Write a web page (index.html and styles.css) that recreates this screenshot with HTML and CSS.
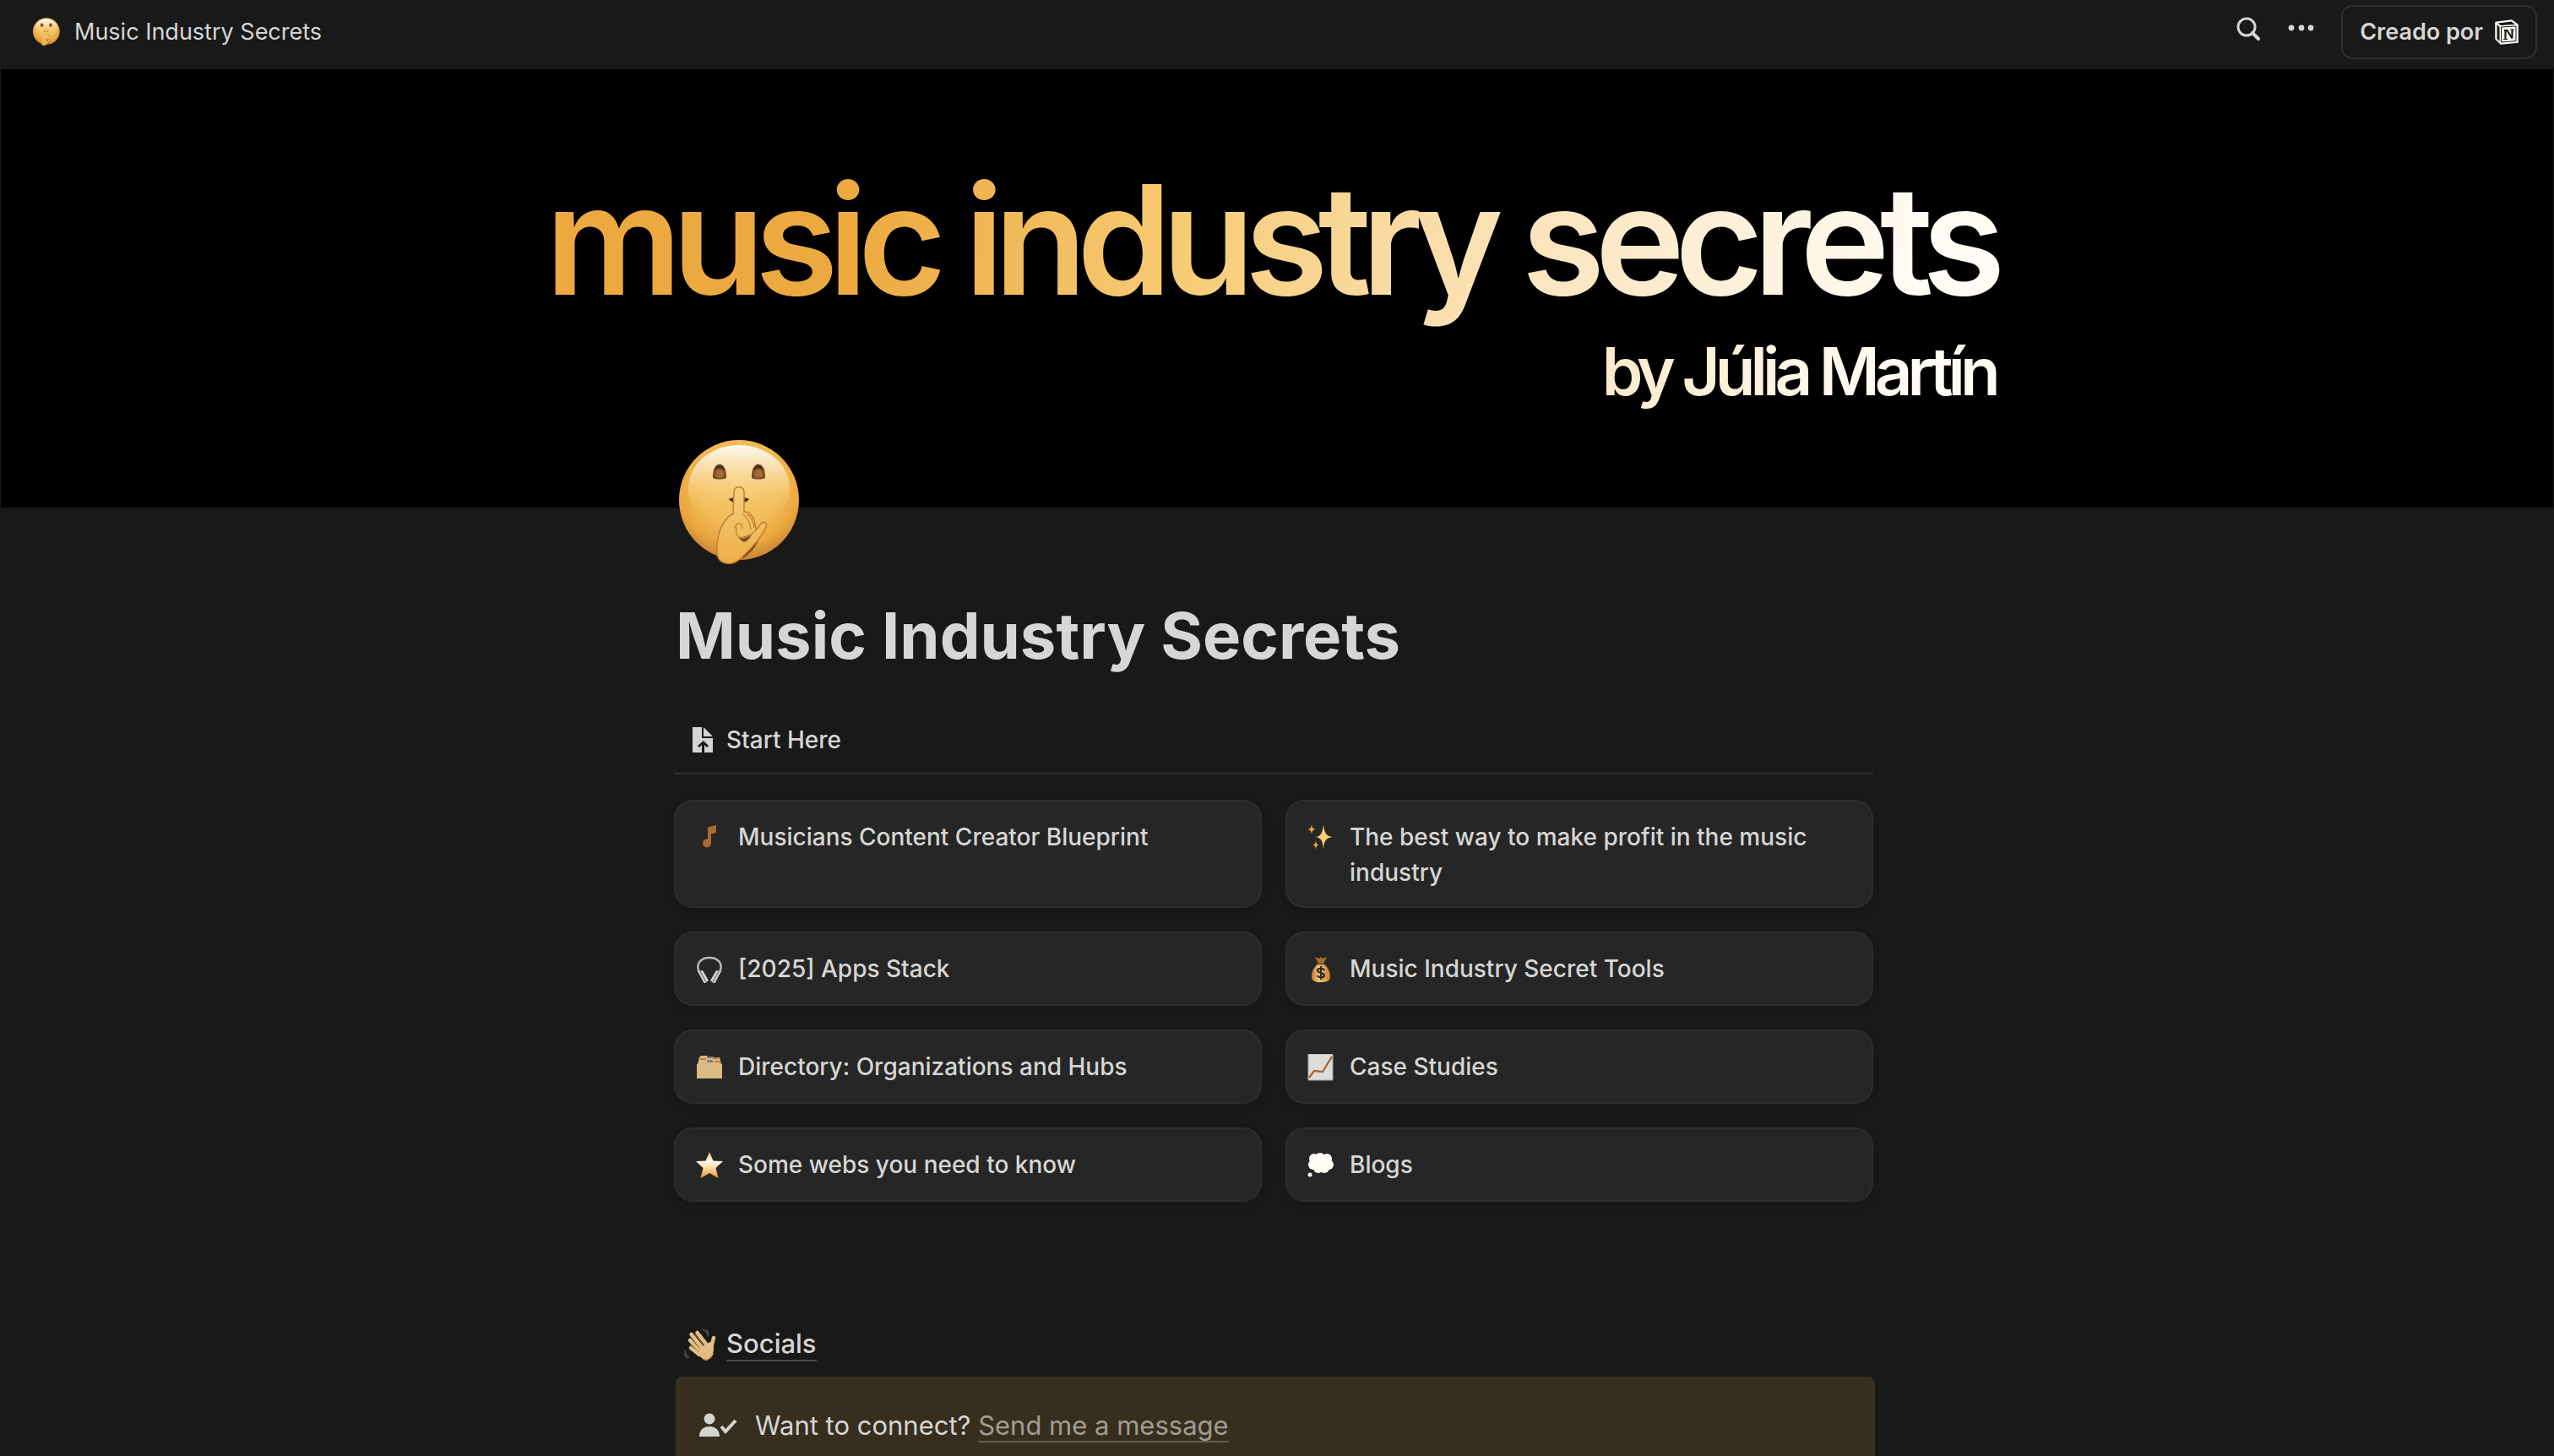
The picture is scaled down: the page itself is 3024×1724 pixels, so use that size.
FILE: index.html
```html
<!DOCTYPE html>
<html lang="es">
<head>
    <meta charset="UTF-8">
    <meta name="viewport" content="width=device-width, initial-scale=1.0">
    <title>Music Industry Secrets</title>
    <link rel="stylesheet" href="styles.css">
</head>
<body>
    <!-- Shared drawings -->
    <svg class="defs" aria-hidden="true">
        <defs>
            <radialGradient id="faceFill" cx="0.5" cy="0.36" r="0.66">
                <stop offset="0" stop-color="#f5cb6c"/>
                <stop offset="0.5" stop-color="#f2bb57"/>
                <stop offset="0.78" stop-color="#eba73f"/>
                <stop offset="1" stop-color="#c37d33"/>
            </radialGradient>
            <linearGradient id="faceShine" x1="0" y1="0" x2="0" y2="1">
                <stop offset="0" stop-color="#fffaee"/>
                <stop offset="0.25" stop-color="#fbe3b8" stop-opacity="0.9"/>
                <stop offset="0.7" stop-color="#f5cb6c" stop-opacity="0.3"/>
                <stop offset="1" stop-color="#f2bb57" stop-opacity="0"/>
            </linearGradient>
            <linearGradient id="handFill" x1="0" y1="0" x2="0" y2="1">
                <stop offset="0" stop-color="#f8cf7c"/>
                <stop offset="1" stop-color="#eeae48"/>
            </linearGradient>
            <linearGradient id="starFill" x1="0" y1="0" x2="0" y2="1">
                <stop offset="0" stop-color="#f3b75a"/>
                <stop offset="0.35" stop-color="#fffaf0"/>
                <stop offset="0.55" stop-color="#fbe0b0"/>
                <stop offset="1" stop-color="#e59a35"/>
            </linearGradient>
            <linearGradient id="bagFill" x1="0" y1="0" x2="1" y2="0">
                <stop offset="0" stop-color="#c37d33"/>
                <stop offset="0.4" stop-color="#f2c877"/>
                <stop offset="1" stop-color="#c37d33"/>
            </linearGradient>
            <symbol id="shush" viewBox="0 0 144 152">
                <circle cx="71" cy="72" r="71" fill="url(#faceFill)"/>
                <ellipse cx="71" cy="58" rx="60" ry="51" fill="url(#faceShine)"/>
                <path d="M40 46c-1-22 17-22 16 0-4 2-12 2-16 0z" fill="#7a4d24"/>
                <path d="M86 46c-1-22 17-22 16 0-4 2-12 2-16 0z" fill="#7a4d24"/>
                <path d="M41 38c2-9 12-9 14 0-3-5-11-5-14 0zM87 38c2-9 12-9 14 0-3-5-11-5-14 0z" fill="#46301a"/>
                <ellipse cx="48" cy="41" rx="5" ry="5" fill="#a4683a"/>
                <ellipse cx="94" cy="41" rx="5" ry="5" fill="#a4683a"/>
                <path d="M59 71c4-3 20-3 24 0-3 6-21 6-24 0z" fill="#46301a"/>
                <path d="M76 141c16-12 20-22 20-34 0-2-18 12-26 22z" fill="#7a4d24"/>
                <path d="M64 88l1-26c1-7 11-7 12 0v24c9 0 13 9 14 22l6-8c4-4 9 0 5 6-6 12-19 26-29 35-9 9-24 9-28-4-1-16 2-39 19-49z" fill="url(#handFill)" stroke="#c37d33" stroke-width="1.500"/>
                <path d="M70 115c2 2 9 1 17-4-2 5-5 9-10 11-4-2-6-4-7-7z" fill="#7a4d24"/>
                <path d="M68 104c-1 8 0 12 7 13 6-1 11-4 14-8M75 88c6 4 9 11 10 19M80 88c5 4 8 10 9 17M66 106c1-9 10-7 9 0" fill="none" stroke="#c98a38" stroke-width="1.500"/>
            </symbol>
        </defs>
    </svg>

    <header class="topbar">
        <a class="breadcrumb" href="#">
            <svg class="breadcrumb-icon"><use href="#shush"/></svg>
            Music Industry Secrets
        </a>
        <div class="actions">
            <button class="icon-button" aria-label="Buscar">
                <svg width="28" height="28" viewBox="0 0 28 28" fill="none" stroke="#d4d4d2"><circle cx="12" cy="12" r="10" stroke-width="3"/><path d="M19 19l7 7" stroke-width="4" stroke-linecap="round"/></svg>
            </button>
            <button class="icon-button" aria-label="Más opciones">
                <svg width="32" height="28" viewBox="0 0 32 28" fill="#d4d4d2"><circle cx="5" cy="13" r="3.4"/><circle cx="17" cy="13" r="3.4"/><circle cx="28" cy="13" r="3.4"/></svg>
            </button>
            <button class="made-by">
                Creado por
                <svg width="28" height="30" viewBox="0 0 28 30">
                    <path d="M1 3.500L20 1l7 5v21l-20 2-6-6z" fill="#fffdf6" stroke="#fffdf6" stroke-width="1.500" stroke-linejoin="round"/>
                    <path d="M3.500 4.500L19.500 2.500 24 6 7 7z" fill="#191919"/>
                    <path d="M2.500 6l3 3v17l-3-3z" fill="#191919"/>
                    <path d="M7.500 9L25 8v17.500L7.500 27z" fill="#fffdf6" stroke="#191919" stroke-width="1"/>
                    <path d="M11 13h3.500l6 9.500M12.500 13v10.500M20.500 12v10.500" fill="none" stroke="#191919" stroke-width="2.200"/>
                    <path d="M10 23.500h5M18 12h5" stroke="#191919" stroke-width="1.200"/>
                </svg>
            </button>
        </div>
    </header>

    <div class="cover">
        <div class="cover-art">
            <p class="cover-title">music industry secrets</p>
            <p class="cover-author">by Júlia Martín</p>
        </div>
    </div>

    <main class="page">
        <svg class="page-icon"><use href="#shush"/></svg>
        <h1>Music Industry Secrets</h1>

        <section class="start">
            <h2 class="tab">
                <svg width="26" height="30" viewBox="0 0 26 30" fill="#d4d4d2"><path d="M1 0h11v13h13v17H15V21l3 3 2-2-6-6-7 6 2 2 3-3v9H1z"/><path d="M14 0l11 11H14z"/></svg>
                Start Here
            </h2>
            <div class="cards">
                <a class="card" href="#">
                    <svg class="card-icon" viewBox="0 0 32 32"><path d="M14 3.500l10-2.500v9l-6 1.500V22a5 5 0 1 1-4-4.500z" fill="#a56b32"/></svg>
                    Musicians Content Creator Blueprint
                </a>
                <a class="card" href="#">
                    <svg class="card-icon" viewBox="0 0 32 32"><path d="M19 0c1 10 3 14 11 15-8 1-10 4-11 14-1-10-3-13-9-14 6-1 8-5 9-15z" fill="#f8cf7c"/><path d="M5 0c.6 4 1 5 4.500 6C6 7 5.600 8 5 12c-.6-4-1-5-4.500-6C4 5 4.400 4 5 0zM10 19c.6 4 1 5 4 5.500-3 .5-3.400 1.500-4 5.500-.6-4-1-5-4-5.500 3-.5 3.400-1.500 4-5.500z" fill="#eba73f"/></svg>
                    The best way to make profit in the music industry
                </a>
                <a class="card" href="#">
                    <svg class="card-icon" viewBox="0 0 32 32"><path d="M4 19C-1 9 6 2 16 2s17 7 12 17" fill="none" stroke="#b9b9b6" stroke-width="2.500"/><path d="M2 18l6-1 7 12-5 4z" fill="#d4d4d2"/><path d="M30 18l-6-1-7 12 5 4z" fill="#d4d4d2"/><path d="M5 18l7 13M27 18l-7 13" stroke="#807f7c" stroke-width="1.500"/></svg>
                    [2025] Apps Stack
                </a>
                <a class="card" href="#">
                    <svg class="card-icon" viewBox="0 0 32 32"><path d="M9 1l5 2 2-2 2 2 5-2-4 8h-6z" fill="#a56b32"/><path d="M13 9h6c5 4 8 9 8 15s-4 7-11 7-11-1-11-7 3-11 8-15z" fill="url(#bagFill)"/><path d="M12 9.500h8" stroke="#7a4d24" stroke-width="2"/><path d="M20 17c-1-3-8-3-8 0 0 4 8 2 8 6 0 3-7 3-8 0M16 12v16" fill="none" stroke="#2f2b26" stroke-width="2.200"/></svg>
                    Music Industry Secret Tools
                </a>
                <a class="card" href="#">
                    <svg class="card-icon" viewBox="0 0 32 32"><path d="M4 4l2-2h7l1 2h14l2 8H2z" fill="#d8b98a"/><path d="M5 5h7v2H5zM20 4h7v2h-7zM22 8h7v2h-7z" fill="#c37d33"/><path d="M13 3h8v2h-8zM13 7h7v3h-7z" fill="#807f7c"/><path d="M1 12h30v17H1z" fill="#dcbb85"/></svg>
                    Directory: Organizations and Hubs
                </a>
                <a class="card" href="#">
                    <svg class="card-icon" viewBox="0 0 32 32"><path d="M1 0h29v31H1z" fill="#dcdcda" stroke="#a5a5a1" stroke-width="1"/><path d="M2 28l6-8 10 1L29 3" fill="none" stroke="#a5642b" stroke-width="2.200"/></svg>
                    Case Studies
                </a>
                <a class="card" href="#">
                    <svg class="card-icon" viewBox="0 0 32 32"><path d="M16 0l4.500 10.500L32 11l-8.500 8 3 12L16 25 5.500 31l3-12L0 11l11.500-.5z" fill="url(#starFill)"/></svg>
                    Some webs you need to know
                </a>
                <a class="card" href="#">
                    <svg class="card-icon" viewBox="0 0 32 32" fill="#fffdf6"><circle cx="8" cy="8" r="6"/><circle cx="15" cy="7" r="6"/><circle cx="23" cy="8" r="6"/><circle cx="7" cy="15" r="6"/><circle cx="25" cy="15" r="6"/><circle cx="16" cy="14" r="7"/><circle cx="13" cy="19" r="6"/><circle cx="20" cy="19" r="6"/><circle cx="3" cy="27" r="2.500"/></svg>
                    Blogs
                </a>
            </div>
        </section>

        <section class="socials">
            <h2>
                <svg width="38" height="38" viewBox="0 0 38 38" fill="none" stroke-linecap="round">
                    <path d="M17 29c3 7 7 9 9 9 4-1 8-4 9-9z" fill="#d38b3a"/>
                    <path d="M35 11l-3 12M15.500 5L28 21M8.500 7L23 25M7 14l13 14M8 23l10 8" stroke="#e2bd86" stroke-width="4.500"/>
                    <path d="M17 23l14-7c4 3 5 8 3 13-2 5-6 8-9 7-5-1-9-5-10-9z" fill="#e2bd86"/>
                    <path d="M12.500 6.500l11 14M8 11.500l11 13M8 19l9 8" stroke="#a0733c" stroke-width="1"/>
                    <path d="M22 1c4 2 6 5 6 8M26 1c2 2 3 4 3 6M1 26c0 3 2 6 5 8M0 30c1 2 2 4 4 5" stroke="#4a4a48" stroke-width="1.500"/>
                </svg>
                <a class="socials-link" href="#">Socials</a>
            </h2>
            <div class="callout">
                <svg width="46" height="30" viewBox="0 0 46 30"><circle cx="12" cy="7" r="6.500" fill="#d4d4d2"/><path d="M0 28c0-8 5-12 12-12s12 4 12 12z" fill="#d4d4d2"/><path d="M26 16l5 6L43 9" fill="none" stroke="#d4d4d2" stroke-width="4"/></svg>
                <p>Want to connect? <a class="message-link" href="#">Send me a message</a></p>
            </div>
        </section>
    </main>
</body>
</html>
```

FILE: styles.css
```css
html {
    overflow: hidden;
}
body {
    margin: 0;
    background: #191919;
    color: #d6d6d4;
    font-family: Inter, sans-serif;
    font-size: 28px;
    line-height: 42px;
}
h1, h2, p {
    margin: 0;
}
a {
    color: inherit;
    text-decoration: none;
}
button {
    background: none;
    border: none;
    color: inherit;
    font: inherit;
    padding: 0;
}
svg {
    display: block;
    flex-shrink: 0;
}
.defs {
    position: absolute;
    width: 0;
    height: 0;
}

/* Top bar */
.topbar {
    display: flex;
    justify-content: space-between;
    align-items: flex-start;
    height: 82px;
    padding: 0 20px 0 38px;
    box-sizing: border-box;
    font-size: 27px;
}
.breadcrumb {
    display: flex;
    align-items: center;
    gap: 16px;
    height: 76px;
}
.breadcrumb-icon {
    width: 34px;
    height: 34px;
}
.actions {
    display: flex;
    align-items: flex-start;
    gap: 32px;
}
.icon-button {
    padding-top: 20px;
}
.made-by {
    display: flex;
    align-items: center;
    gap: 14px;
    height: 64px;
    margin-top: 6px;
    padding: 0 20px;
    border: 2px solid #2f2f2f;
    border-radius: 14px;
    font-weight: 600;
}

/* Cover */
.cover {
    display: flex;
    justify-content: center;
    height: 519px;
    margin: 0 1px;
    background: #000;
}
.cover-art {
    padding-top: 94px;
    font-weight: 600;
    text-align: right;
    color: transparent;
    background: linear-gradient(100deg, #eca940 22%, #f6cb74 43%, #fbe3bb 65%, #fffcf5 92%);
    -webkit-background-clip: text;
    background-clip: text;
}
.cover-title {
    padding-right: 16px;
    font-size: 180px;
    line-height: 216px;
    letter-spacing: -12px;
}
.cover-author {
    padding-right: 16px;
    font-size: 78px;
    line-height: 96px;
    letter-spacing: -6px;
}

/* Page */
.page {
    max-width: 1420px;
    margin: 0 auto;
    padding-right: 4px;
}
.page-icon {
    position: relative;
    width: 144px;
    height: 152px;
    margin: -81px 0 0 4px;
}
h1 {
    margin-top: 32px;
    font-size: 76px;
    line-height: 96px;
    font-weight: 700;
}
.start {
    margin: 0 2px 0 -2px;
}
.tab {
    display: flex;
    align-items: center;
    gap: 15px;
    margin-top: 55px;
    padding: 0 0 18px 21px;
    border-bottom: 2px solid #2f2f2f;
    font-size: 28px;
    font-weight: 500;
}
.cards {
    display: grid;
    grid-template-columns: 1fr 1fr;
    gap: 28px;
    margin-top: 30px;
}
.card {
    display: flex;
    align-items: flex-start;
    gap: 18px;
    min-height: 88px;
    box-sizing: border-box;
    padding: 21px 24px 19px;
    border: 2px solid #2d2d2d;
    border-radius: 22px;
    background: #262626;
    box-shadow: 0 4px 8px rgba(0, 0, 0, 0.1);
    font-weight: 500;
}
.card-icon {
    width: 32px;
    height: 32px;
    margin-top: 6px;
}

/* Socials */
.socials {
    margin-top: 149px;
}
.socials h2 {
    display: flex;
    align-items: center;
    gap: 12px;
    padding-left: 10px;
    font-size: 31px;
    line-height: 44px;
    font-weight: 500;
}
.socials-link {
    border-bottom: 2px solid #4a4a49;
    line-height: 38px;
}
.callout {
    display: flex;
    align-items: center;
    gap: 20px;
    margin-top: 18px;
    padding: 34px 28px 48px;
    border-radius: 8px;
    background: #372e20;
    font-size: 31px;
    line-height: 48px;
}
.message-link {
    color: #a09c96;
    border-bottom: 2px solid #625b50;
}
```
